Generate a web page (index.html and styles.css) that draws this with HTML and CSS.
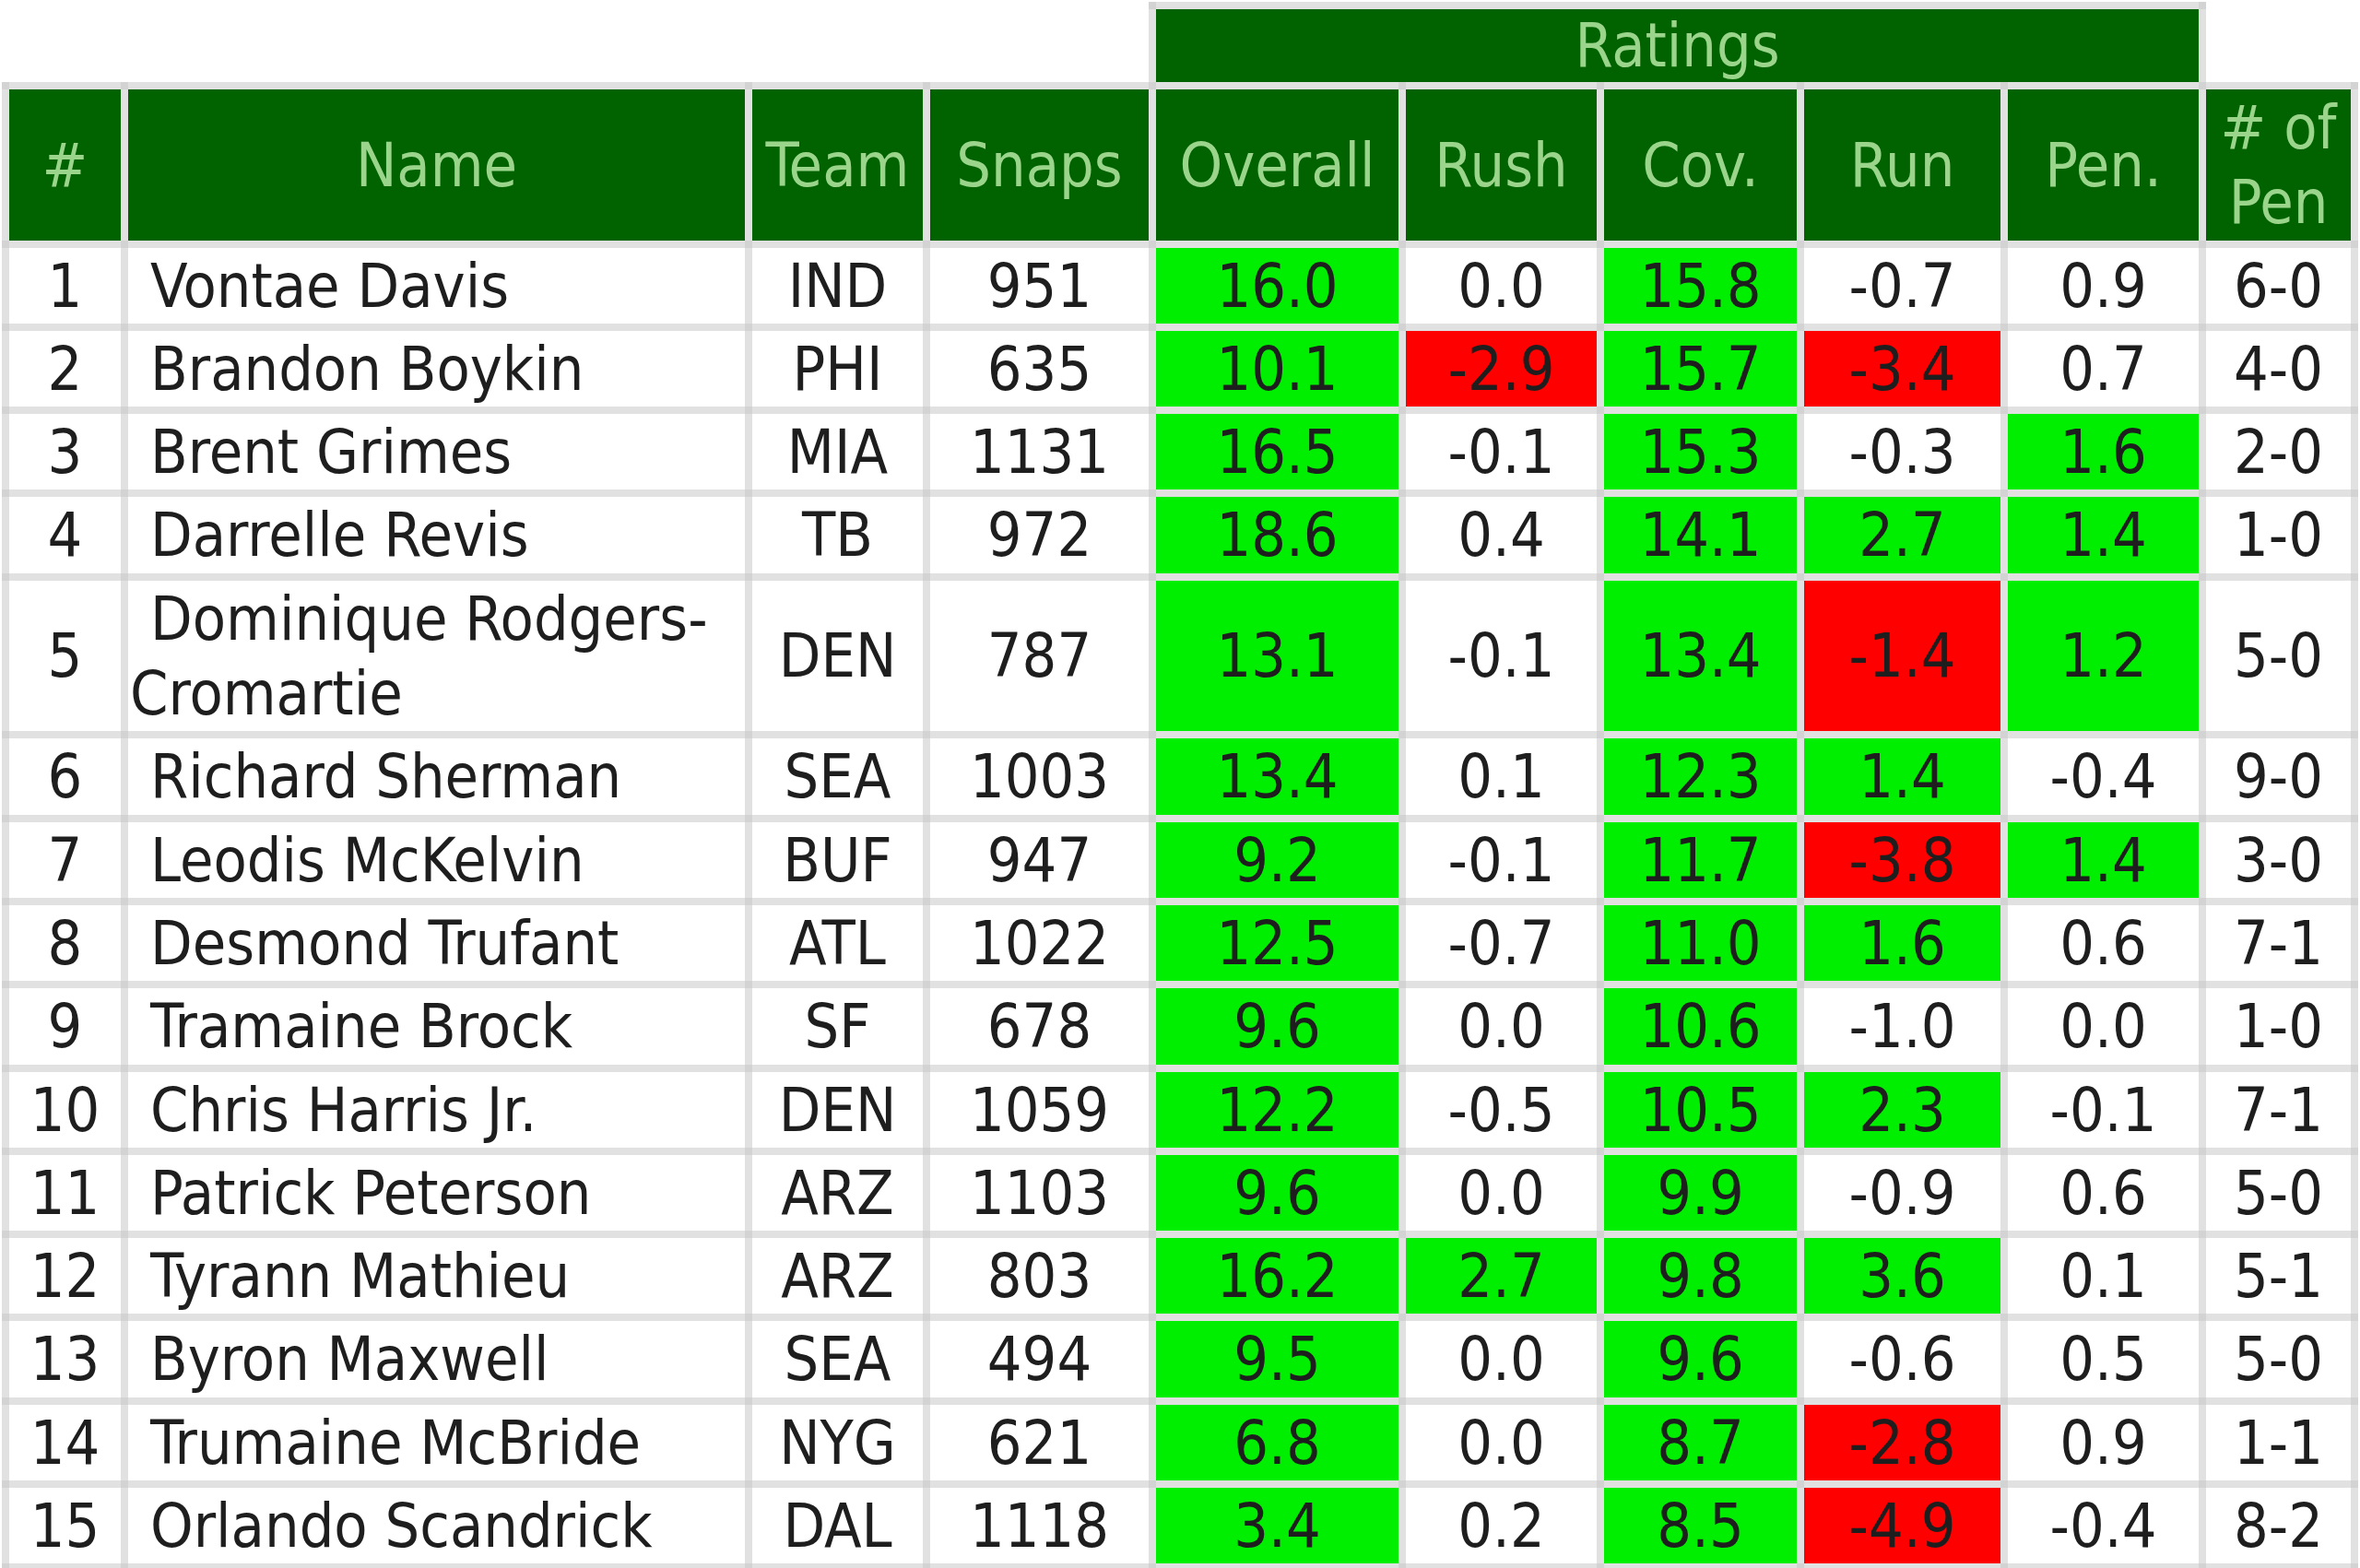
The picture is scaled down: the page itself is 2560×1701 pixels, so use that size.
FILE: index.html
```html
<!DOCTYPE html>
<html lang="en">
<head>
<meta charset="utf-8">
<title>Cornerback Ratings</title>
<link rel="stylesheet" href="styles.css">
</head>
<body>
<table class="ratings-table">
  <colgroup>
    <col class="c-rank"><col class="c-name"><col class="c-team"><col class="c-snaps">
    <col class="c-overall"><col class="c-rush"><col class="c-cov"><col class="c-run"><col class="c-pen"><col class="c-npen">
  </colgroup>
  <thead>
    <tr class="group-row">
      <th class="blank" colspan="4"></th>
      <th class="group" colspan="5">Ratings</th>
      <th class="blank"></th>
    </tr>
    <tr class="head-row">
      <th>#</th><th>Name</th><th>Team</th><th>Snaps</th><th>Overall</th><th>Rush</th><th>Cov.</th><th>Run</th><th>Pen.</th><th># of<br>Pen</th>
    </tr>
  </thead>
  <tbody>
    <tr><td>1</td><td class="name">Vontae Davis</td><td>IND</td><td>951</td><td class="good">16.0</td><td>0.0</td><td class="good">15.8</td><td>-0.7</td><td>0.9</td><td>6-0</td></tr>
    <tr><td>2</td><td class="name">Brandon Boykin</td><td>PHI</td><td>635</td><td class="good">10.1</td><td class="bad">-2.9</td><td class="good">15.7</td><td class="bad">-3.4</td><td>0.7</td><td>4-0</td></tr>
    <tr><td>3</td><td class="name">Brent Grimes</td><td>MIA</td><td>1131</td><td class="good">16.5</td><td>-0.1</td><td class="good">15.3</td><td>-0.3</td><td class="good">1.6</td><td>2-0</td></tr>
    <tr><td>4</td><td class="name">Darrelle Revis</td><td>TB</td><td>972</td><td class="good">18.6</td><td>0.4</td><td class="good">14.1</td><td class="good">2.7</td><td class="good">1.4</td><td>1-0</td></tr>
    <tr><td>5</td><td class="name">Dominique Rodgers-Cromartie</td><td>DEN</td><td>787</td><td class="good">13.1</td><td>-0.1</td><td class="good">13.4</td><td class="bad">-1.4</td><td class="good">1.2</td><td>5-0</td></tr>
    <tr><td>6</td><td class="name">Richard Sherman</td><td>SEA</td><td>1003</td><td class="good">13.4</td><td>0.1</td><td class="good">12.3</td><td class="good">1.4</td><td>-0.4</td><td>9-0</td></tr>
    <tr><td>7</td><td class="name">Leodis McKelvin</td><td>BUF</td><td>947</td><td class="good">9.2</td><td>-0.1</td><td class="good">11.7</td><td class="bad">-3.8</td><td class="good">1.4</td><td>3-0</td></tr>
    <tr><td>8</td><td class="name">Desmond Trufant</td><td>ATL</td><td>1022</td><td class="good">12.5</td><td>-0.7</td><td class="good">11.0</td><td class="good">1.6</td><td>0.6</td><td>7-1</td></tr>
    <tr><td>9</td><td class="name">Tramaine Brock</td><td>SF</td><td>678</td><td class="good">9.6</td><td>0.0</td><td class="good">10.6</td><td>-1.0</td><td>0.0</td><td>1-0</td></tr>
    <tr><td>10</td><td class="name">Chris Harris Jr.</td><td>DEN</td><td>1059</td><td class="good">12.2</td><td>-0.5</td><td class="good">10.5</td><td class="good">2.3</td><td>-0.1</td><td>7-1</td></tr>
    <tr><td>11</td><td class="name">Patrick Peterson</td><td>ARZ</td><td>1103</td><td class="good">9.6</td><td>0.0</td><td class="good">9.9</td><td>-0.9</td><td>0.6</td><td>5-0</td></tr>
    <tr><td>12</td><td class="name">Tyrann Mathieu</td><td>ARZ</td><td>803</td><td class="good">16.2</td><td class="good">2.7</td><td class="good">9.8</td><td class="good">3.6</td><td>0.1</td><td>5-1</td></tr>
    <tr><td>13</td><td class="name">Byron Maxwell</td><td>SEA</td><td>494</td><td class="good">9.5</td><td>0.0</td><td class="good">9.6</td><td>-0.6</td><td>0.5</td><td>5-0</td></tr>
    <tr><td>14</td><td class="name">Trumaine McBride</td><td>NYG</td><td>621</td><td class="good">6.8</td><td>0.0</td><td class="good">8.7</td><td class="bad">-2.8</td><td>0.9</td><td>1-1</td></tr>
    <tr><td>15</td><td class="name">Orlando Scandrick</td><td>DAL</td><td>1118</td><td class="good">3.4</td><td>0.2</td><td class="good">8.5</td><td class="bad">-4.9</td><td>-0.4</td><td>8-2</td></tr>
  </tbody>
</table>
</body>
</html>
```
FILE: styles.css
```css
html, body {
  margin: 0;
  padding: 0;
  background: #ffffff;
}

body {
  overflow: hidden;
}

.ratings-table {
  margin: 2px 0 0 2px;
  border-collapse: collapse;
  table-layout: fixed;
  width: 2556px;
  font-family: "DejaVu Sans Condensed", "DejaVu Sans", Verdana, sans-serif;
  font-stretch: condensed;
  font-size: 66px;
  line-height: 81.3px;
  color: #1e1e1e;
}

.c-rank { width: 129px; }
.c-name { width: 677px; }
.c-team { width: 193px; }
.c-snaps { width: 245px; }
.c-overall { width: 271px; }
.c-rush { width: 215px; }
.c-cov { width: 217px; }
.c-run { width: 221px; }
.c-pen { width: 215px; }
.c-npen { width: 165px; }

.ratings-table th,
.ratings-table td {
  border: 8px solid rgba(200, 200, 200, 0.55);
  padding: 1px 2px 0;
  text-align: center;
  vertical-align: middle;
  white-space: normal;
  overflow: hidden;
}

.ratings-table th {
  background: #006300;
  color: #9bd58c;
  font-weight: normal;
}

.ratings-table th.blank {
  background: transparent;
  border: none;
}

.group-row th.group {
  line-height: 79px;
  padding-top: 0;
}

.ratings-table td.name {
  text-align: left;
  text-indent: 22px;
}

.ratings-table td.good {
  background: #00ee00;
}

.ratings-table td.bad {
  background: #ff0000;
}
```
